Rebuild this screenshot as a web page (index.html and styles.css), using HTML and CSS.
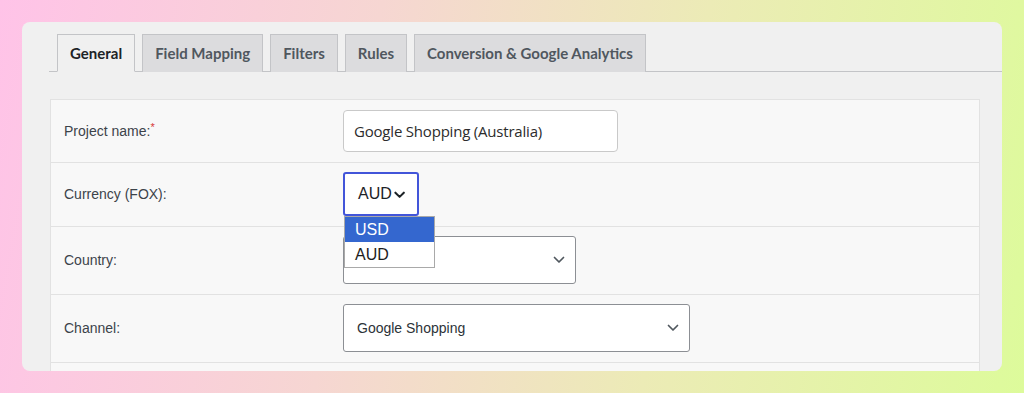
FILE: index.html
```html
<!DOCTYPE html>
<html lang="en">
<head>
  <meta charset="UTF-8" />
  <meta name="viewport" content="width=device-width, initial-scale=1.0"/>
  <title>Project settings</title>
  <link rel="stylesheet" href="styles.css">
</head>
<body>

<div class="card">
  <nav class="tabs">
    <a class="tab active">General</a>
    <a class="tab">Field Mapping</a>
    <a class="tab">Filters</a>
    <a class="tab">Rules</a>
    <a class="tab">Conversion &amp; Google Analytics</a>
  </nav>

  <div class="panel">
    <div class="row">
      <div class="label">Project name:<span class="req">*</span></div>
      <div class="field">
        <div class="text-input">Google Shopping (Australia)</div>
      </div>
    </div>

    <div class="row">
      <div class="label">Currency (FOX):</div>
      <div class="field">
        <div class="select currency">
          <span>AUD</span>
          <svg class="chev-bold" width="12" height="8" viewBox="0 0 12 8"><path d="M1.5 1.5 L6 6 L10.5 1.5" fill="none" stroke="#1d2327" stroke-width="2.2" stroke-linecap="round" stroke-linejoin="round"/></svg>
        </div>
        <ul class="dropdown">
          <li class="selected">USD</li>
          <li>AUD</li>
        </ul>
      </div>
    </div>

    <div class="row">
      <div class="label">Country:</div>
      <div class="field">
        <div class="select country">
          <span></span>
          <svg class="chev" width="12" height="8" viewBox="0 0 12 8"><path d="M1.5 1.5 L6 6 L10.5 1.5" fill="none" stroke="#50575e" stroke-width="1.7" stroke-linecap="round" stroke-linejoin="round"/></svg>
        </div>
      </div>
    </div>

    <div class="row">
      <div class="label">Channel:</div>
      <div class="field">
        <div class="select channel">
          <span>Google Shopping</span>
          <svg class="chev" width="12" height="8" viewBox="0 0 12 8"><path d="M1.5 1.5 L6 6 L10.5 1.5" fill="none" stroke="#50575e" stroke-width="1.7" stroke-linecap="round" stroke-linejoin="round"/></svg>
        </div>
      </div>
    </div>

    <div class="row">
      <div class="label"></div>
      <div class="field">
        <div class="select channel"><span></span></div>
      </div>
    </div>
  </div>
</div>

</body>
</html>
```

FILE: styles.css
```css
* {
  margin: 0;
  padding: 0;
  box-sizing: border-box;
}

html, body {
  height: 100%;
}

body {
  font-family: 'Liberation Sans', Arial, sans-serif;
  background: linear-gradient(100deg, #ffc3e8 0%, #f6d6d2 35%, #ecebb6 65%, #ddfb9b 100%);
  padding: 22px;
  overflow: hidden;
}

.card {
  height: 349px;
  background: #f0f0f0;
  border-radius: 8px;
  padding: 12px 22px 0 28px;
  overflow: hidden;
}

.tabs {
  display: flex;
  gap: 7px;
  padding-left: 8px;
  margin-left: -1px;
  margin-right: -22px;
  border-bottom: 1px solid #c3c4c7;
}

.tab {
  font-family: 'Lato', sans-serif;
  font-weight: 700;
  font-size: 15px;
  line-height: 20px;
  padding: 8px 12px;
  color: #50575e;
  background: #dcdcde;
  border: 1px solid #c3c4c7;
  border-bottom: none;
  margin-bottom: -1px;
  white-space: nowrap;
}

.tab.active {
  background: #f0f0f0;
  color: #1d2327;
  border-bottom: 1px solid #f0f0f0;
  padding-bottom: 8px;
}

.panel {
  margin-top: 27px;
  background: #f8f8f8;
  border: 1px solid #e2e2e2;
  border-bottom: none;
}

.row {
  display: grid;
  grid-template-columns: 292px 1fr;
  align-items: center;
  padding: 10px 0;
  border-bottom: 1px solid #e2e2e2;
}

.row:nth-child(2) { padding: 9px 0 10px; }
.row:nth-child(3) { padding: 8px 0 10px; }
.row:nth-child(4) { padding: 9px 0 10px; }

.label {
  padding-left: 13px;
  font-size: 14px;
  color: #3c434a;
}

.req {
  color: #d63638;
  font-size: 11px;
  vertical-align: top;
  position: relative;
  top: -2px;
}

.field {
  position: relative;
}

.text-input {
  width: 275px;
  height: 42px;
  padding: 0 10px;
  display: flex;
  align-items: center;
  background: #fff;
  border: 1px solid #c9c9c9;
  border-radius: 4px;
  font-family: 'Open Sans', sans-serif;
  font-size: 15px;
  color: #2c2c2c;
  letter-spacing: -0.2px;
}

.select {
  display: flex;
  align-items: center;
  justify-content: space-between;
  background: #fff;
  border: 1px solid #8c8f94;
  border-radius: 3px;
  color: #2c3338;
}

.currency {
  width: 76px;
  height: 44px;
  padding: 0 12px 0 13px;
  border: 2px solid #4255d9;
  font-size: 16px;
  color: #1d2327;
}

.chev-bold {
  margin-left: 2px;
  margin-top: 1px;
}

.country {
  width: 233px;
  height: 48px;
  padding: 0 10px 0 14px;
  margin-top: 1px;
}

.channel {
  width: 347px;
  height: 48px;
  padding: 0 10px 0 13px;
  font-size: 14px;
}

.dropdown {
  position: absolute;
  left: 1px;
  top: 44px;
  width: 91px;
  list-style: none;
  background: #fff;
  border: 1px solid #a9a9a9;
  font-size: 16px;
  color: #1d1d1d;
  z-index: 2;
}

.dropdown li {
  height: 25px;
  line-height: 25px;
  padding-left: 10px;
}

.dropdown li.selected {
  background: #3467cf;
  color: #fff;
}
```
